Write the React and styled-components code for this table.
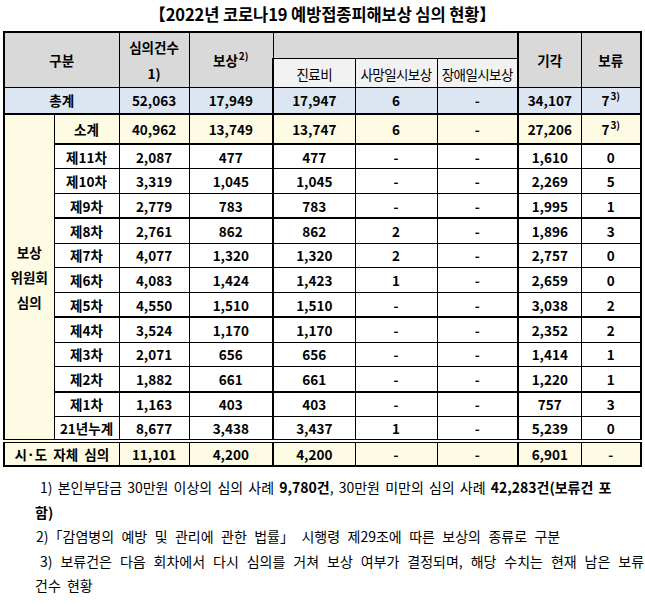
import React from "react";
import styled, { createGlobalStyle, css } from "styled-components";

const GlobalStyle = createGlobalStyle`
  html, body {
    margin: 0;
    padding: 0;
    background: #fff;
    overflow: hidden;
  }
  body {
    font-family: "Noto Sans CJK KR", "Noto Sans", sans-serif;
    color: #000;
  }
`;

const rounds = [
  ["제11차", "2,087", "477", "477", "-", "-", "1,610", "0"],
  ["제10차", "3,319", "1,045", "1,045", "-", "-", "2,269", "5"],
  ["제9차", "2,779", "783", "783", "-", "-", "1,995", "1"],
  ["제8차", "2,761", "862", "862", "2", "-", "1,896", "3", true],
  ["제7차", "4,077", "1,320", "1,320", "2", "-", "2,757", "0"],
  ["제6차", "4,083", "1,424", "1,423", "1", "-", "2,659", "0"],
  ["제5차", "4,550", "1,510", "1,510", "-", "-", "3,038", "2"],
  ["제4차", "3,524", "1,170", "1,170", "-", "-", "2,352", "2", true],
  ["제3차", "2,071", "656", "656", "-", "-", "1,414", "1"],
  ["제2차", "1,882", "661", "661", "-", "-", "1,220", "1"],
  ["제1차", "1,163", "403", "403", "-", "-", "757", "3", true],
  ["21년누계", "8,677", "3,438", "3,437", "1", "-", "5,239", "0"],
];

const App = () => {
  return (
    <Page>
      <GlobalStyle />
      <Title>【2022년 코로나19 예방접종피해보상 심의 현황】</Title>
      <Table>
        <colgroup>
          <col style={{ width: 50 }} />
          <col style={{ width: 65 }} />
          <col style={{ width: 70 }} />
          <col style={{ width: 84 }} />
          <col style={{ width: 82 }} />
          <col style={{ width: 82 }} />
          <col style={{ width: 81 }} />
          <col style={{ width: 63 }} />
          <col style={{ width: 60 }} />
        </colgroup>
        <thead>
          <HeadRow $h={26}>
            <Head rowSpan={2} colSpan={2}>
              구분
            </Head>
            <Head rowSpan={2}>
              심의건수
              <br />
              1)
            </Head>
            <Head rowSpan={2}>
              보상<Sup>2)</Sup>
            </Head>
            <Head colSpan={3} />
            <Head rowSpan={2} $thickLeft>
              기각
            </Head>
            <Head rowSpan={2}>보류</Head>
          </HeadRow>
          <HeadRow $h={29}>
            <SubHead $thickLeft>진료비</SubHead>
            <SubHead>사망일시보상</SubHead>
            <SubHead>장애일시보상</SubHead>
          </HeadRow>
        </thead>
        <tbody>
          <Row $h={27} $tone="blue">
            <Cell colSpan={2}>총계</Cell>
            <Cell>52,063</Cell>
            <Cell>17,949</Cell>
            <Cell $thickLeft>17,947</Cell>
            <Cell>6</Cell>
            <Cell>-</Cell>
            <Cell $thickLeft>34,107</Cell>
            <Cell>
              7<Sup>3)</Sup>
            </Cell>
          </Row>
          <Row $h={30} $tone="yellow" $top="thick" $bottom>
            <Cell rowSpan={13} $side>
              보상
              <br />
              위원회
              <br />
              심의
            </Cell>
            <Cell>소계</Cell>
            <Cell>40,962</Cell>
            <Cell>13,749</Cell>
            <Cell $thickLeft>13,747</Cell>
            <Cell>6</Cell>
            <Cell>-</Cell>
            <Cell $thickLeft>27,206</Cell>
            <Cell>
              7<Sup>3)</Sup>
            </Cell>
          </Row>
          {rounds.map(([label, ...rest]) => {
            const thick = rest[7] === true;
            const vals = rest.slice(0, 7);
            return (
              <Row key={label} $h={24.75} $top={thick ? "thick" : null}>
                <Cell>{label}</Cell>
                {vals.map((v, i) => (
                  <Cell key={i} $thickLeft={i === 2 || i === 5}>
                    {v}
                  </Cell>
                ))}
              </Row>
            );
          })}
          <Row $h={25} $tone="yellow" $top="double">
            <Cell colSpan={2} $spaced>
              시·도 자체 심의
            </Cell>
            <Cell>11,101</Cell>
            <Cell>4,200</Cell>
            <Cell $thickLeft>4,200</Cell>
            <Cell>-</Cell>
            <Cell>-</Cell>
            <Cell $thickLeft>6,901</Cell>
            <Cell>-</Cell>
          </Row>
        </tbody>
      </Table>
      <Notes>
        <NoteLine $indent={5} $gap={2}>
          1) 본인부담금 30만원 이상의 심의 사례 <B>9,780건</B>, 30만원 미만의 심의 사례{" "}
          <B>42,283건(보류건 포</B>
        </NoteLine>
        <NoteLine>
          <B>함)</B>
        </NoteLine>
        <NoteLine $indent={1} $gap={4.3}>
          2)「감염병의 예방 및 관리에 관한 법률」 시행령 제29조에 따른 보상의 종류로 구분
        </NoteLine>
        <NoteLine $indent={5} $gap={4.8}>
          3) 보류건은 다음 회차에서 다시 심의를 거쳐 보상 여부가 결정되며, 해당 수치는 현재 남은 보류
        </NoteLine>
        <NoteLine $gap={3}>건수 현황</NoteLine>
      </Notes>
    </Page>
  );
};

const Page = styled.div`
  width: 645px;
  height: 605px;
  padding: 0 3px 0 3px;
  box-sizing: border-box;
  display: flex;
  flex-direction: column;
`;

const Title = styled.h1`
  margin: 0;
  height: 31px;
  line-height: 28px;
  text-align: center;
  font-size: 16.5px;
  font-weight: 700;
  letter-spacing: -0.1px;
`;

const Table = styled.table`
  width: 638px;
  border-collapse: collapse;
  table-layout: fixed;
  border: 2px solid #000;
  font-size: 13.5px;
  font-weight: 700;
  text-align: center;
`;

const HeadRow = styled.tr`
  height: ${(p) => p.$h}px;
`;

const thickLeft = css`
  border-left: 2px solid #000;
`;

const Head = styled.th`
  background: #d9d9d9;
  border: 1px solid #000;
  padding: 0;
  font-weight: 700;
  line-height: 26px;
  ${(p) => p.$thickLeft && thickLeft}
`;

const SubHead = styled.th`
  background: #f2f2f2;
  border: 1px solid #000;
  padding: 2px 0 0;
  font-weight: 400;
  white-space: nowrap;
  letter-spacing: -0.6px;
  ${(p) => p.$thickLeft && thickLeft}
`;

const tones = {
  blue: "#dce6f2",
  yellow: "#fefbe4",
};

const Row = styled.tr`
  height: ${(p) => p.$h}px;
  background: ${(p) => tones[p.$tone] || "#fff"};
  ${(p) =>
    p.$top === "thick" &&
    css`
      & > td {
        border-top: 2px solid #000;
      }
    `}
  ${(p) =>
    p.$top === "double" &&
    css`
      & > td {
        border-top: 4px double #000;
      }
    `}
  ${(p) =>
    p.$bottom &&
    css`
      & > td {
        border-bottom: 2px solid #000;
      }
    `}
`;

const Cell = styled.td`
  border: 1px solid #000;
  padding: 0;
  white-space: nowrap;
  ${(p) => p.$thickLeft && thickLeft}
  ${(p) =>
    p.$side &&
    css`
      background: #fefbe4;
      line-height: 25px;
      border-bottom: 1px solid #000 !important;
    `}
  ${(p) =>
    p.$spaced &&
    css`
      word-spacing: 3px;
    `}
`;

const Sup = styled.sup`
  font-size: 10px;
  line-height: 0;
  vertical-align: 6px;
  margin-left: 1px;
`;

const Notes = styled.div`
  padding: 8px 0 0 32px;
  font-size: 14px;
  line-height: 24.5px;
  font-weight: 400;
`;

const NoteLine = styled.div`
  white-space: nowrap;
  padding-left: ${(p) => p.$indent || 0}px;
  word-spacing: ${(p) => p.$gap || 0}px;
`;

const B = styled.b`
  font-weight: 700;
`;

export default App;
